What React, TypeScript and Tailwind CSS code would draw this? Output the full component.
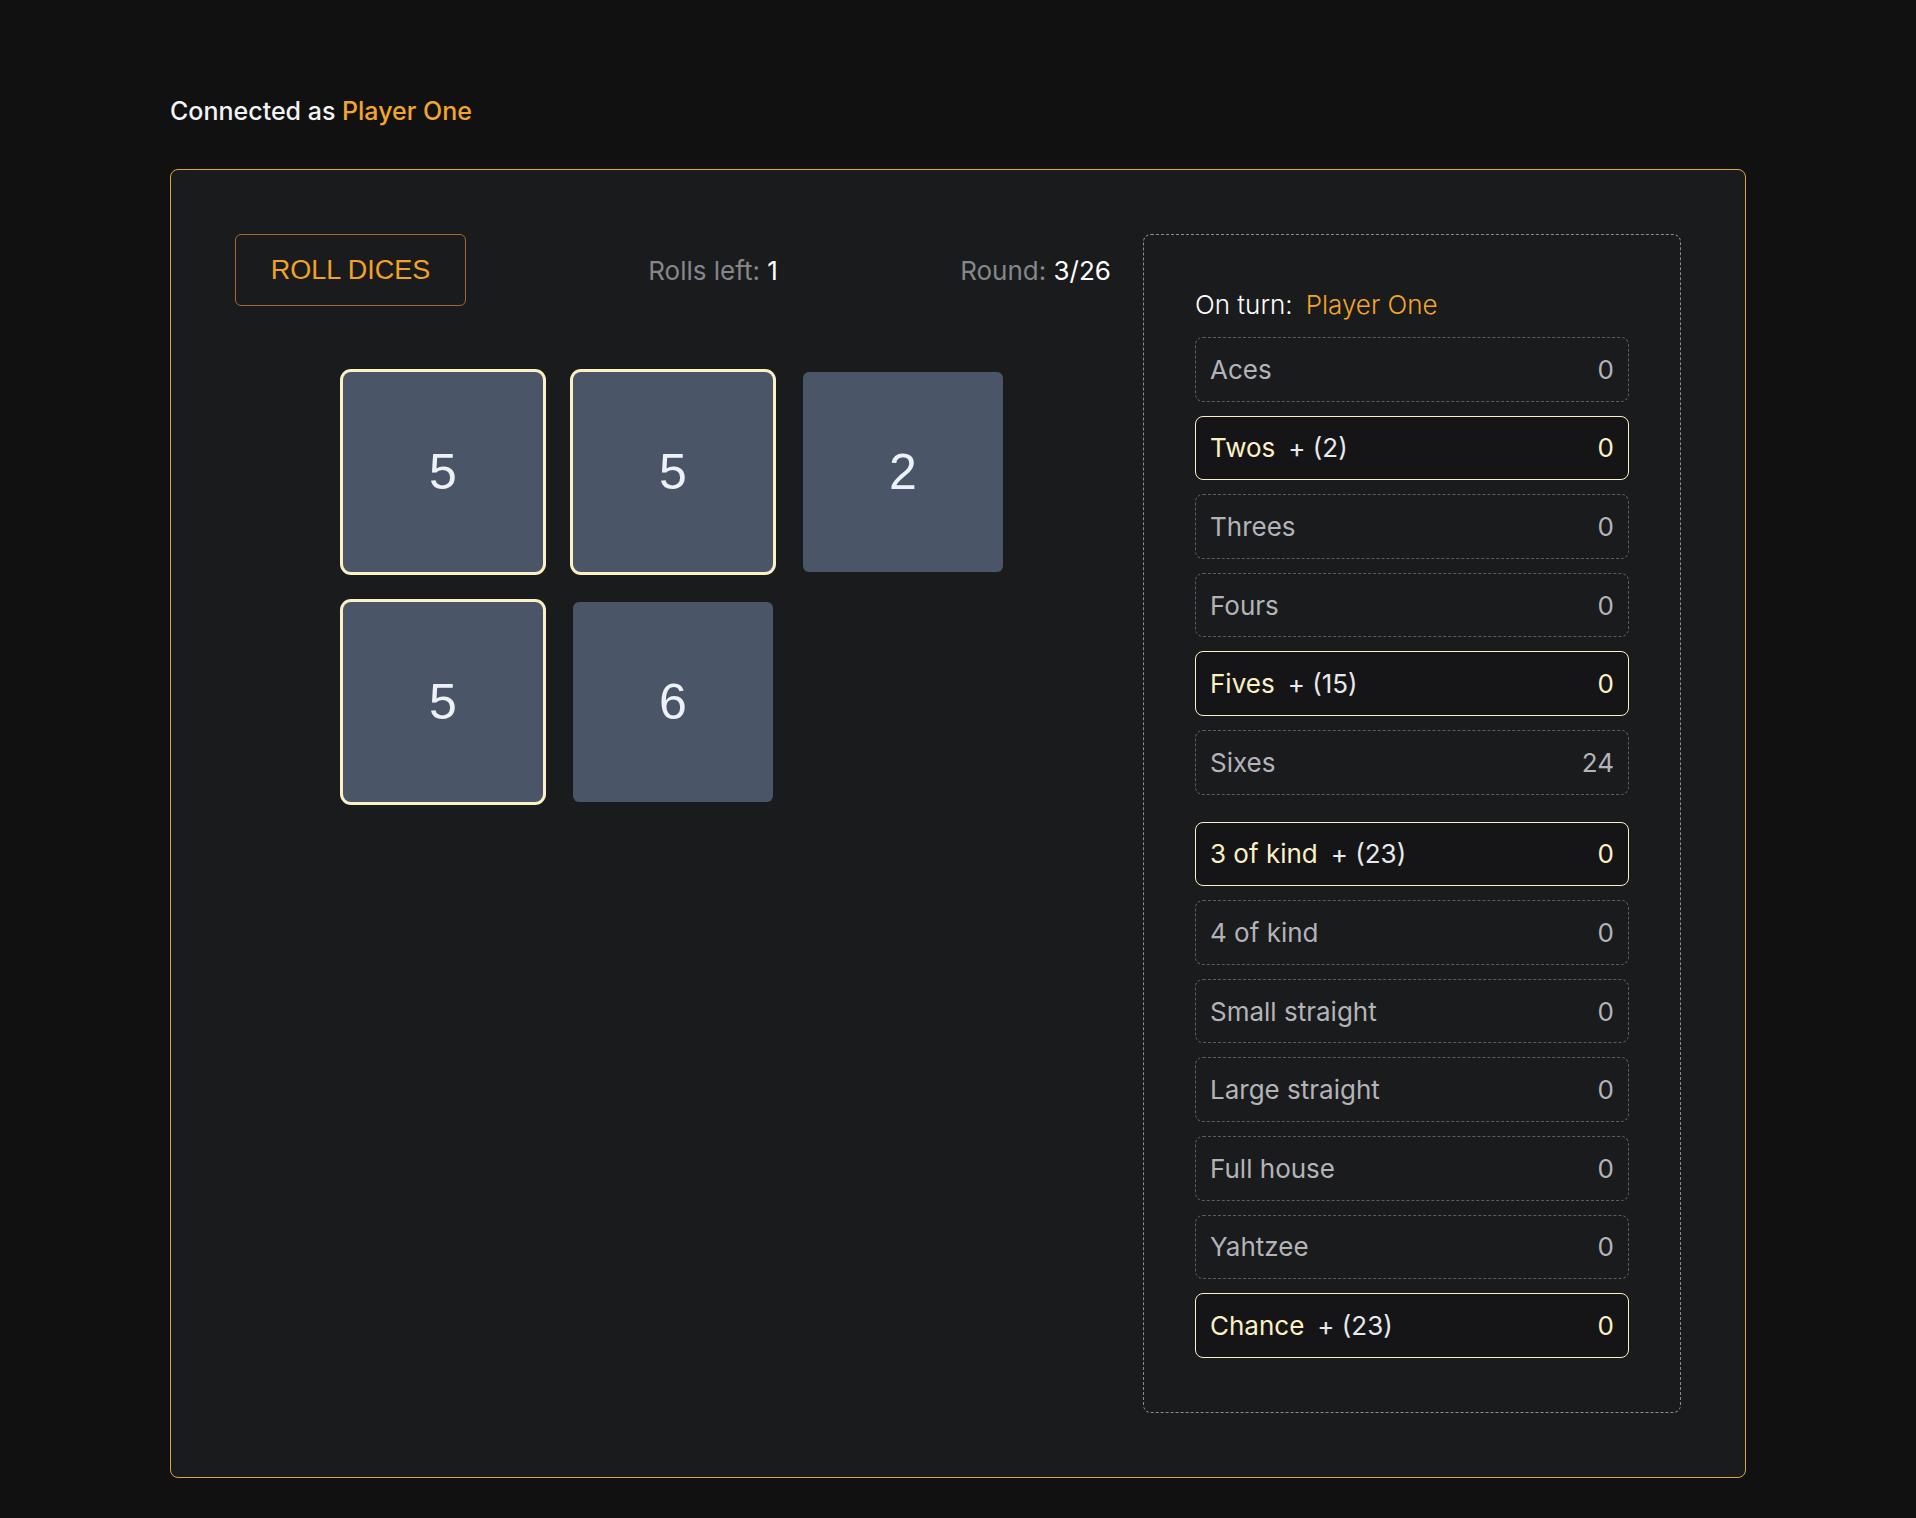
import React from "react";

type Die = { value: number; held: boolean };
type Row = { name: string; score: number; bonus?: number; gapBefore?: boolean };

const dice: Die[] = [
  { value: 5, held: true },
  { value: 5, held: true },
  { value: 2, held: false },
  { value: 5, held: true },
  { value: 6, held: false },
];

const rows: Row[] = [
  { name: "Aces", score: 0 },
  { name: "Twos", score: 0, bonus: 2 },
  { name: "Threes", score: 0 },
  { name: "Fours", score: 0 },
  { name: "Fives", score: 0, bonus: 15 },
  { name: "Sixes", score: 24 },
  { name: "3 of kind", score: 0, bonus: 23, gapBefore: true },
  { name: "4 of kind", score: 0 },
  { name: "Small straight", score: 0 },
  { name: "Large straight", score: 0 },
  { name: "Full house", score: 0 },
  { name: "Yahtzee", score: 0 },
  { name: "Chance", score: 0, bonus: 23 },
];

function DieBox({ die }: { die: Die }) {
  return (
    <div
      className={
        die.held
          ? "w-[200px] h-[200px] rounded-lg bg-[#4a5568] flex items-center justify-center ring-[3px] ring-[#fcf1c4]"
          : "w-[200px] h-[200px] rounded-md bg-[#4a5568] flex items-center justify-center"
      }
    >
      <span className="font-['Liberation_Sans',Arial,sans-serif] text-[50px] leading-none text-[#eef2f7]">
        {die.value}
      </span>
    </div>
  );
}

function ScoreRow({ row }: { row: Row }) {
  const hot = row.bonus !== undefined;
  return (
    <div
      className={
        (row.gapBefore ? "mt-[13px] " : "") +
        (hot
          ? "h-[64.6px] rounded-lg border border-[#fcf1c4] bg-[#151517] px-[14px] flex items-center justify-between text-[26px]"
          : "h-[64.6px] rounded-lg border border-dashed border-[#5c5d61] px-[14px] flex items-center justify-between text-[26px]")
      }
    >
      <div className="flex items-center">
        <span className={hot ? "text-[#fcf1c4]" : "text-[#b3b3b8]"}>{row.name}</span>
        {hot && <span className="ml-[13px] text-[#e8e9ec]">+ ({row.bonus})</span>}
      </div>
      <span className={hot ? "text-[#fcf1c4]" : "text-[#b3b3b8]"}>{row.score}</span>
    </div>
  );
}

export default function App() {
  return (
    <div className="min-h-screen bg-[#111111] px-[170px] pt-[95px] pb-[40px] font-['Inter',sans-serif]">
      <div className="text-[25px] leading-8 font-medium text-[#f4f4f5] mb-[42px]">
        Connected as <span className="text-[#f2a52a]">Player One</span>
      </div>

      <div className="border border-[#e3a33b] rounded-lg bg-[#1a1b1d] p-[64px] flex gap-[32px]">
        <div className="w-[876px] flex flex-col">
          <div className="flex items-center justify-between">
            <button className="w-[231px] h-[72px] border border-[#a3692c] rounded-md font-['Liberation_Sans',Arial,sans-serif] text-[27px] text-[#f2a224]">
              ROLL DICES
            </button>
            <div className="text-[26px] text-[#86868c]">
              Rolls left: <span className="text-white">1</span>
            </div>
            <div className="text-[26px] text-[#86868c]">
              Round: <span className="text-white">3/26</span>
            </div>
          </div>

          <div className="mt-[66px] mx-auto grid grid-cols-3 gap-[30px]">
            {dice.map((d, i) => (
              <DieBox key={i} die={d} />
            ))}
          </div>
        </div>

        <div className="flex-1 border border-dashed border-[#8c8c90] rounded-lg pt-[52px] px-[51px] pb-[54px] flex flex-col gap-[14px]">
          <div className="text-[26px] leading-[36px] font-light text-white">
            On turn:<span className="ml-[13px] text-[#f2a52a]">Player One</span>
          </div>
          {rows.map((r) => (
            <ScoreRow key={r.name} row={r} />
          ))}
        </div>
      </div>
    </div>
  );
}
